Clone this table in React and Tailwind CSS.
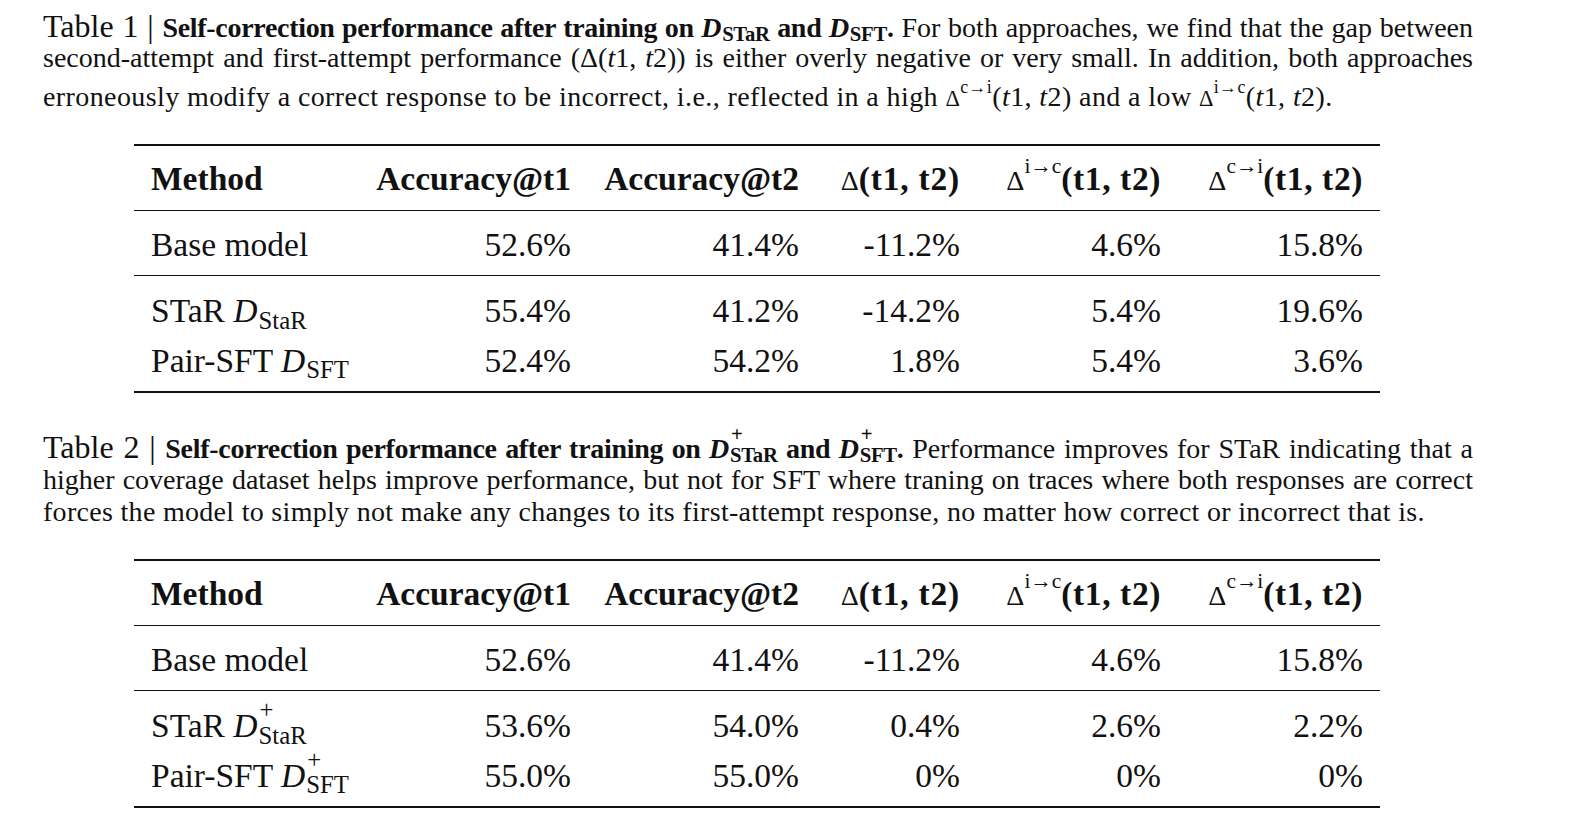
import React from "react";

const COLS = "grid grid-cols-[227px_227px_228px_161px_201px_202px]";

const D = () => <i className="pr-[1px]">D</i>;
const Sub = ({ children, cap }) => (
  <span className={`relative ${cap ? "top-[0.18em]" : "top-[0.28em]"} text-[0.74em] leading-none`}>{children}</span>
);
const SubPlus = ({ children, cap }) => (
  <span className={`relative ${cap ? "top-[0.18em]" : "top-[0.28em]"} text-[0.74em] leading-none`}>
    <span className="absolute left-[1px] -top-[0.95em]">+</span>
    {children}
  </span>
);
const Delta = ({ sup }) => (
  <span className="font-normal">
    <span className="text-[0.8em]">Δ</span>
    {sup && (
      <span className="relative -top-[0.7em] text-[0.64em] leading-none">{sup}</span>
    )}
  </span>
);
const DeltaT = ({ sup }) => (
  <span className="font-normal">
    <span className="text-[0.84em]">Δ</span>
    {sup && (
      <span className="relative -top-[0.8em] text-[0.64em] leading-none">{sup}</span>
    )}
  </span>
);
const T12 = () => (
  <>
    (<i>t</i>1, <i>t</i>2)
  </>
);

function Cell({ children, first }) {
  return first ? (
    <div className="pl-[17px] whitespace-nowrap">{children}</div>
  ) : (
    <div className="pr-[17px] text-right whitespace-nowrap">{children}</div>
  );
}

function Header() {
  return (
    <div className={`${COLS} h-[65px] pt-[2px] items-center border-b border-[#111] font-bold`}>
      <Cell first>Method</Cell>
      <Cell>Accuracy@t1</Cell>
      <Cell>Accuracy@t2</Cell>
      <Cell>
        <DeltaT />
        <span className="tracking-[0.8px]">(t1, t2)</span>
      </Cell>
      <Cell>
        <DeltaT sup="i→c" />
        <span className="tracking-[0.6px]">(t1, t2)</span>
      </Cell>
      <Cell>
        <DeltaT sup="c→i" />
        <span className="tracking-[0.6px]">(t1, t2)</span>
      </Cell>
    </div>
  );
}

function Row({ cells, h }) {
  return (
    <div className={`${COLS} ${h} items-center`}>
      {cells.map((c, i) => (
        <Cell key={i} first={i === 0}>
          {c}
        </Cell>
      ))}
    </div>
  );
}

function Table({ rowA, rowB }) {
  return (
    <div className="ml-[134px] w-[1246px] border-t-2 border-b-2 border-[#111] text-[33.5px] leading-none">
      <Header />
      <div className={`${COLS} h-[65px] pt-[4px] items-center border-b border-[#111]`}>
        {["Base model", "52.6%", "41.4%", "-11.2%", "4.6%", "15.8%"].map((c, i) => (
          <Cell key={i} first={i === 0}>
            {c}
          </Cell>
        ))}
      </div>
      <div className="pt-[10px] pb-[6px]">
        <Row cells={rowA} h="h-[49.5px]" />
        <Row cells={rowB} h="h-[49.5px]" />
      </div>
    </div>
  );
}

const Big = ({ children }) => (
  <span className="text-[32px] leading-[20px] font-normal">{children}</span>
);

const JUST = "whitespace-nowrap text-justify [text-align-last:justify]";

export default function App() {
  return (
    <div className="w-[1596px] h-[832px] bg-white text-[#111] font-['Liberation_Serif',serif] overflow-hidden">
      {/* Caption 1 */}
      <div className="pl-[43px] w-[1473px] pt-[13px] text-[28px]">
        <div className={`h-[30px] leading-[29px] ${JUST}`}>
          <Big>Table 1 | </Big>
          <b className="tracking-[-0.3px]">
            Self-correction performance after training on <D />
            <Sub cap>STaR</Sub> and <D />
            <Sub cap>SFT</Sub>.
          </b>{" "}
          For both approaches, we find that the gap between
        </div>
        <div className={`h-[39px] leading-[29px] ${JUST}`}>
          second-attempt and first-attempt performance (Δ<T12 />) is either overly negative or very small. In addition, both approaches
        </div>
        <div className="h-[29px] leading-[29px] whitespace-nowrap tracking-[0.4px]">
          erroneously modify a correct response to be incorrect, i.e., reflected in a high <Delta sup="c→i" />
          <T12 /> and a low <Delta sup="i→c" />
          <T12 />.
        </div>
      </div>

      <div className="mt-[33px]">
        <Table
          rowA={[
            <>
              STaR <D />
              <Sub>StaR</Sub>
            </>,
            "55.4%",
            "41.2%",
            "-14.2%",
            "5.4%",
            "19.6%",
          ]}
          rowB={[
            <>
              Pair-SFT <D />
              <Sub>SFT</Sub>
            </>,
            "52.4%",
            "54.2%",
            "1.8%",
            "5.4%",
            "3.6%",
          ]}
        />
      </div>

      {/* Caption 2 */}
      <div className="pl-[43px] w-[1473px] mt-[41px] text-[28px]">
        <div className={`h-[31px] leading-[29px] ${JUST}`}>
          <Big>Table 2 | </Big>
          <b className="tracking-[-0.3px]">
            Self-correction performance after training on <D />
            <SubPlus cap>STaR</SubPlus> and <D />
            <SubPlus cap>SFT</SubPlus>.
          </b>{" "}
          Performance improves for STaR indicating that a
        </div>
        <div className={`h-[32px] leading-[29px] ${JUST}`}>
          higher coverage dataset helps improve performance, but not for SFT where traning on traces where both responses are correct
        </div>
        <div className="h-[29px] leading-[29px] whitespace-nowrap tracking-[0.3px]">
          forces the model to simply not make any changes to its first-attempt response, no matter how correct or incorrect that is.
        </div>
      </div>

      <div className="mt-[33px]">
        <Table
          rowA={[
            <>
              STaR <D />
              <SubPlus>StaR</SubPlus>
            </>,
            "53.6%",
            "54.0%",
            "0.4%",
            "2.6%",
            "2.2%",
          ]}
          rowB={[
            <>
              Pair-SFT <D />
              <SubPlus>SFT</SubPlus>
            </>,
            "55.0%",
            "55.0%",
            "0%",
            "0%",
            "0%",
          ]}
        />
      </div>
    </div>
  );
}
